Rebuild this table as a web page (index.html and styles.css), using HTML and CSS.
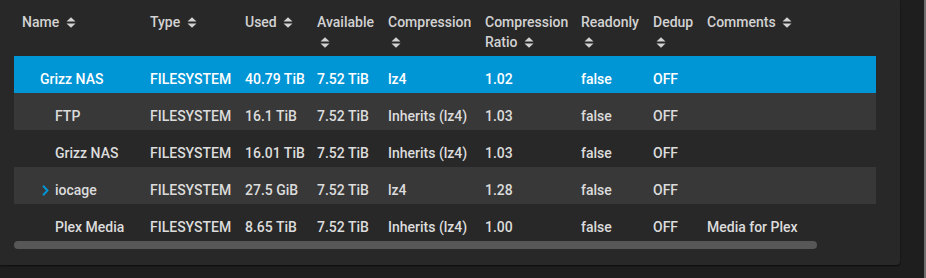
FILE: index.html
```html
<!DOCTYPE html>
<html>
<head>
<meta charset="utf-8">
<link rel="stylesheet" href="styles.css">
</head>
<body>
<div class="page">
  <div class="card">
    <table class="grid">
      <colgroup>
        <col class="c-name"><col class="c-type"><col class="c-used"><col class="c-avail"><col class="c-comp"><col class="c-ratio"><col class="c-ro"><col class="c-dedup"><col class="c-comm">
      </colgroup>
      <thead>
        <tr>
          <th>Name <svg class="sort" viewBox="0 0 10 11"><path d="M0.5 4.6 L5 0.3 L9.5 4.6 Z M0.5 6.4 L5 10.7 L9.5 6.4 Z"/></svg></th>
          <th>Type <svg class="sort" viewBox="0 0 10 11"><path d="M0.5 4.6 L5 0.3 L9.5 4.6 Z M0.5 6.4 L5 10.7 L9.5 6.4 Z"/></svg></th>
          <th>Used <svg class="sort" viewBox="0 0 10 11"><path d="M0.5 4.6 L5 0.3 L9.5 4.6 Z M0.5 6.4 L5 10.7 L9.5 6.4 Z"/></svg></th>
          <th>Available <svg class="sort" viewBox="0 0 10 11"><path d="M0.5 4.6 L5 0.3 L9.5 4.6 Z M0.5 6.4 L5 10.7 L9.5 6.4 Z"/></svg></th>
          <th>Compression <svg class="sort" viewBox="0 0 10 11"><path d="M0.5 4.6 L5 0.3 L9.5 4.6 Z M0.5 6.4 L5 10.7 L9.5 6.4 Z"/></svg></th>
          <th>Compression Ratio <svg class="sort" viewBox="0 0 10 11"><path d="M0.5 4.6 L5 0.3 L9.5 4.6 Z M0.5 6.4 L5 10.7 L9.5 6.4 Z"/></svg></th>
          <th>Readonly <svg class="sort" viewBox="0 0 10 11"><path d="M0.5 4.6 L5 0.3 L9.5 4.6 Z M0.5 6.4 L5 10.7 L9.5 6.4 Z"/></svg></th>
          <th>Dedup <svg class="sort" viewBox="0 0 10 11"><path d="M0.5 4.6 L5 0.3 L9.5 4.6 Z M0.5 6.4 L5 10.7 L9.5 6.4 Z"/></svg></th>
          <th>Comments <svg class="sort" viewBox="0 0 10 11"><path d="M0.5 4.6 L5 0.3 L9.5 4.6 Z M0.5 6.4 L5 10.7 L9.5 6.4 Z"/></svg></th>
        </tr>
      </thead>
      <tbody>
        <tr class="selected">
          <td><span class="name lvl0">Grizz NAS</span></td>
          <td>FILESYSTEM</td><td>40.79 TiB</td><td>7.52 TiB</td><td>lz4</td><td>1.02</td><td>false</td><td>OFF</td><td></td>
        </tr>
        <tr class="alt">
          <td><span class="name lvl1">FTP</span></td>
          <td>FILESYSTEM</td><td>16.1 TiB</td><td>7.52 TiB</td><td>Inherits (lz4)</td><td>1.03</td><td>false</td><td>OFF</td><td></td>
        </tr>
        <tr>
          <td><span class="name lvl1">Grizz NAS</span></td>
          <td>FILESYSTEM</td><td>16.01 TiB</td><td>7.52 TiB</td><td>Inherits (lz4)</td><td>1.03</td><td>false</td><td>OFF</td><td></td>
        </tr>
        <tr class="alt">
          <td><span class="name lvl1"><svg class="chev" viewBox="0 0 7 11"><path d="M1 0.8 L5.5 5.5 L1 10.2"/></svg>iocage</span></td>
          <td>FILESYSTEM</td><td>27.5 GiB</td><td>7.52 TiB</td><td>lz4</td><td>1.28</td><td>false</td><td>OFF</td><td></td>
        </tr>
        <tr>
          <td><span class="name lvl1">Plex Media</span></td>
          <td>FILESYSTEM</td><td>8.65 TiB</td><td>7.52 TiB</td><td>Inherits (lz4)</td><td>1.00</td><td>false</td><td>OFF</td><td>Media for Plex</td>
        </tr>
      </tbody>
    </table>
    <div class="hscroll"><div class="thumb"></div></div>
  </div>
</div>
<div class="vbar"></div>
</body>
</html>
```
FILE: styles.css
```css
html, body {
  margin: 0;
  padding: 0;
}
body {
  width: 926px;
  height: 278px;
  background: #1e1e1e;
  display: flex;
  font-family: Roboto, "Noto Sans", sans-serif;
  font-weight: 500;
  font-size: 14px;
  overflow: hidden;
}
.page {
  flex: 1;
}
.vbar {
  width: 2px;
  background: #6f6f6f;
}
.card {
  width: 900px;
  height: 265px;
  box-sizing: border-box;
  background: #282828;
  border-radius: 0 0 4px 0;
  box-shadow: 0 1px 2px rgba(0, 0, 0, 0.6);
  padding: 0 24px 0 14px;
}
.grid {
  width: 862px;
  border-collapse: collapse;
  table-layout: fixed;
}
.c-name { width: 128px; }
.c-type { width: 95px; }
.c-used { width: 72px; }
.c-avail { width: 71px; }
.c-comp { width: 97px; }
.c-ratio { width: 96px; }
.c-ro { width: 72px; }
.c-dedup { width: 54px; }
.c-comm { width: 177px; }

th {
  height: 56px;
  box-sizing: border-box;
  padding: 12px 8px 0 8px;
  vertical-align: top;
  text-align: left;
  font-weight: 500;
  line-height: 20px;
  color: #d2d2d2;
}
.sort {
  width: 10px;
  height: 11px;
  margin-left: 3px;
  vertical-align: -1px;
  fill: #d2d2d2;
}
td {
  height: 37px;
  box-sizing: border-box;
  padding: 15px 8px 0 8px;
  vertical-align: top;
  line-height: 17px;
  color: #dcdcdc;
  white-space: nowrap;
}
tr.selected td {
  background: #0095d5;
  color: #ffffff;
}
tr.alt td {
  background: #383838;
}
.name {
  display: inline-flex;
  align-items: center;
}
.lvl0 { padding-left: 18px; }
.lvl1 { padding-left: 33px; position: relative; }
.chev {
  position: absolute;
  left: 20px;
  top: 3px;
  width: 7px;
  height: 11px;
  fill: none;
  stroke: #0095d5;
  stroke-width: 2;
}
.hscroll {
  width: 862px;
  height: 8px;
}
.thumb {
  width: 803px;
  height: 8px;
  border-radius: 4px;
  background: #575757;
}
```
